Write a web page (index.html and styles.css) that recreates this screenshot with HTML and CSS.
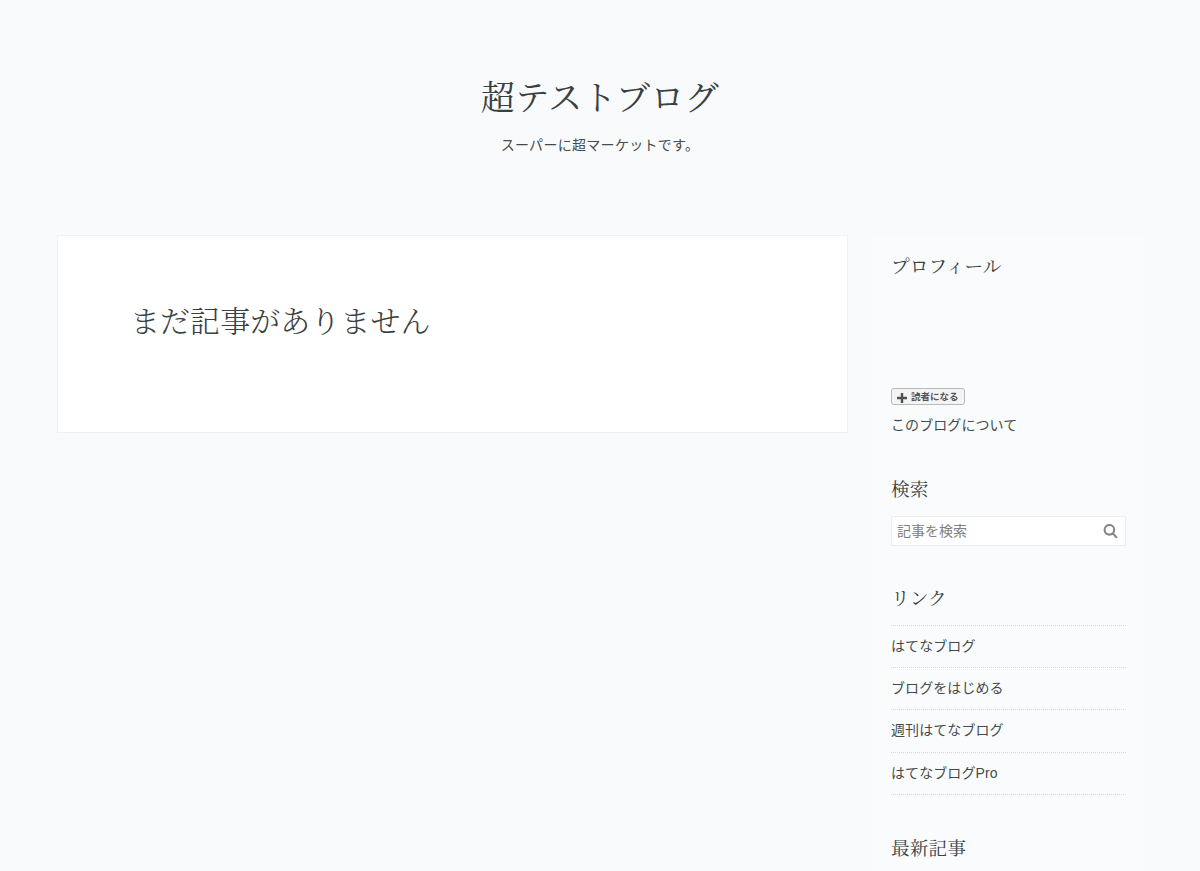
FILE: index.html
```html
<!DOCTYPE html>
<html lang="ja">
  <head>
    <meta charset="UTF-8" />
    <meta name="viewport" content="width=device-width, initial-scale=1.0" />
    <title>超テストブログ</title>
    <link rel="stylesheet" href="styles.css">
  </head>
  <body>
    <header class="blog-header">
      <h1 class="blog-title">超テストブログ</h1>
      <p class="blog-description">スーパーに超マーケットです。</p>
    </header>
    <div class="content">
      <main class="entry">
        <h2 class="entry-title">まだ記事がありません</h2>
      </main>
      <aside class="sidebar">
        <section class="module module-profile">
          <h3 class="module-title">プロフィール</h3>
          <div class="profile-body">
            <button class="subscribe">
              <svg class="plus-icon" viewBox="0 0 10 10"><path d="M5 0v10M0 5h10" /></svg>
              <span>読者になる</span>
            </button>
            <a class="about-link">このブログについて</a>
          </div>
        </section>
        <section class="module module-search">
          <h3 class="module-title">検索</h3>
          <form class="search-form">
            <input class="search-input" type="text" placeholder="記事を検索" />
            <svg class="search-icon" viewBox="0 0 15 15">
              <circle cx="6.4" cy="5.8" r="4.8" />
              <path d="M9.6 9.2l4.4 4.7" />
            </svg>
          </form>
        </section>
        <section class="module module-links">
          <h3 class="module-title">リンク</h3>
          <ul class="link-list">
            <li>はてなブログ</li>
            <li>ブログをはじめる</li>
            <li>週刊はてなブログ</li>
            <li>はてなブログPro</li>
          </ul>
        </section>
        <section class="module">
          <h3 class="module-title">最新記事</h3>
        </section>
      </aside>
    </div>
  </body>
</html>
```
FILE: styles.css
```css
* {
  box-sizing: border-box;
}

body {
  margin: 0;
  height: 871px;
  overflow: hidden;
  background-color: #f8fafc;
  color: #454b4b;
  font-family: "Liberation Sans", "Noto Sans CJK JP", sans-serif;
  font-size: 14px;
  letter-spacing: 0.08px;
}

h1,
h2,
h3,
p,
ul {
  margin: 0;
  padding: 0;
  font-weight: 400;
}

.blog-title,
.entry-title,
.module-title {
  color: #384141;
  font-family: "Noto Serif CJK JP", "Noto Sans CJK JP", serif;
}

.blog-header {
  height: 235px;
  padding-top: 71px;
  text-align: center;
}

.blog-title {
  font-size: 34px;
  line-height: 50px;
  letter-spacing: 0.4px;
}

.blog-description {
  margin-top: 14px;
  line-height: 21px;
  letter-spacing: 0.3px;
}

.content {
  display: flex;
  align-items: flex-start;
  justify-content: space-between;
  width: 1087px;
  margin-left: 57px;
}

.entry {
  width: 791px;
  height: 198px;
  padding: 61px 72px;
  background-color: #fff;
  border: 1px solid #eff1f2;
}

.entry-title {
  font-size: 30px;
  font-weight: 300;
  line-height: 44px;
  letter-spacing: 0.05px;
}

.sidebar {
  width: 272px;
  height: 636px;
  padding: 16px 18px 0 19px;
  background-color: #fafbfd;
}

.module-title {
  font-size: 18.7px;
  line-height: 28px;
  letter-spacing: 0.05px;
}

.module-profile {
  height: 223px;
}

.profile-body {
  display: flex;
  flex-direction: column;
  align-items: flex-start;
  padding-top: 109px;
}

.subscribe {
  display: flex;
  align-items: center;
  gap: 4px;
  width: 74px;
  height: 17px;
  padding: 0 4px 0 5px;
  border: 1px solid #b9bbbb;
  border-radius: 3px;
  background-color: #f4f4f4;
  color: #555;
  font-family: inherit;
  font-size: 9.5px;
  font-weight: 700;
  line-height: 15px;
  white-space: nowrap;
}

.plus-icon {
  flex: none;
  width: 10px;
  height: 10px;
  margin-top: 2px;
  stroke: #505050;
  stroke-width: 2.4;
}

.about-link {
  margin-top: 9px;
  line-height: 22px;
}

.module-search {
  height: 109px;
}

.search-form {
  display: flex;
  align-items: center;
  height: 30px;
  margin-top: 14px;
  padding: 0 7px 0 5px;
  background-color: #fff;
  border: 1px solid #ebedee;
}

.search-input {
  flex: 1;
  min-width: 0;
  padding: 0;
  border: 0;
  outline: 0;
  background: none;
  font-family: inherit;
  font-size: 14px;
}

.search-input::placeholder {
  color: #808080;
}

.search-icon {
  width: 15px;
  height: 15px;
  fill: none;
  stroke: #858585;
  stroke-width: 2.1;
}

.module-links {
  height: 250px;
}

.link-list {
  margin-top: 14px;
  border-top: 1px dotted #d4dadb;
  list-style: none;
}

.link-list li {
  height: 42.2px;
  border-bottom: 1px dotted #d4dadb;
  line-height: 41px;
}
```
